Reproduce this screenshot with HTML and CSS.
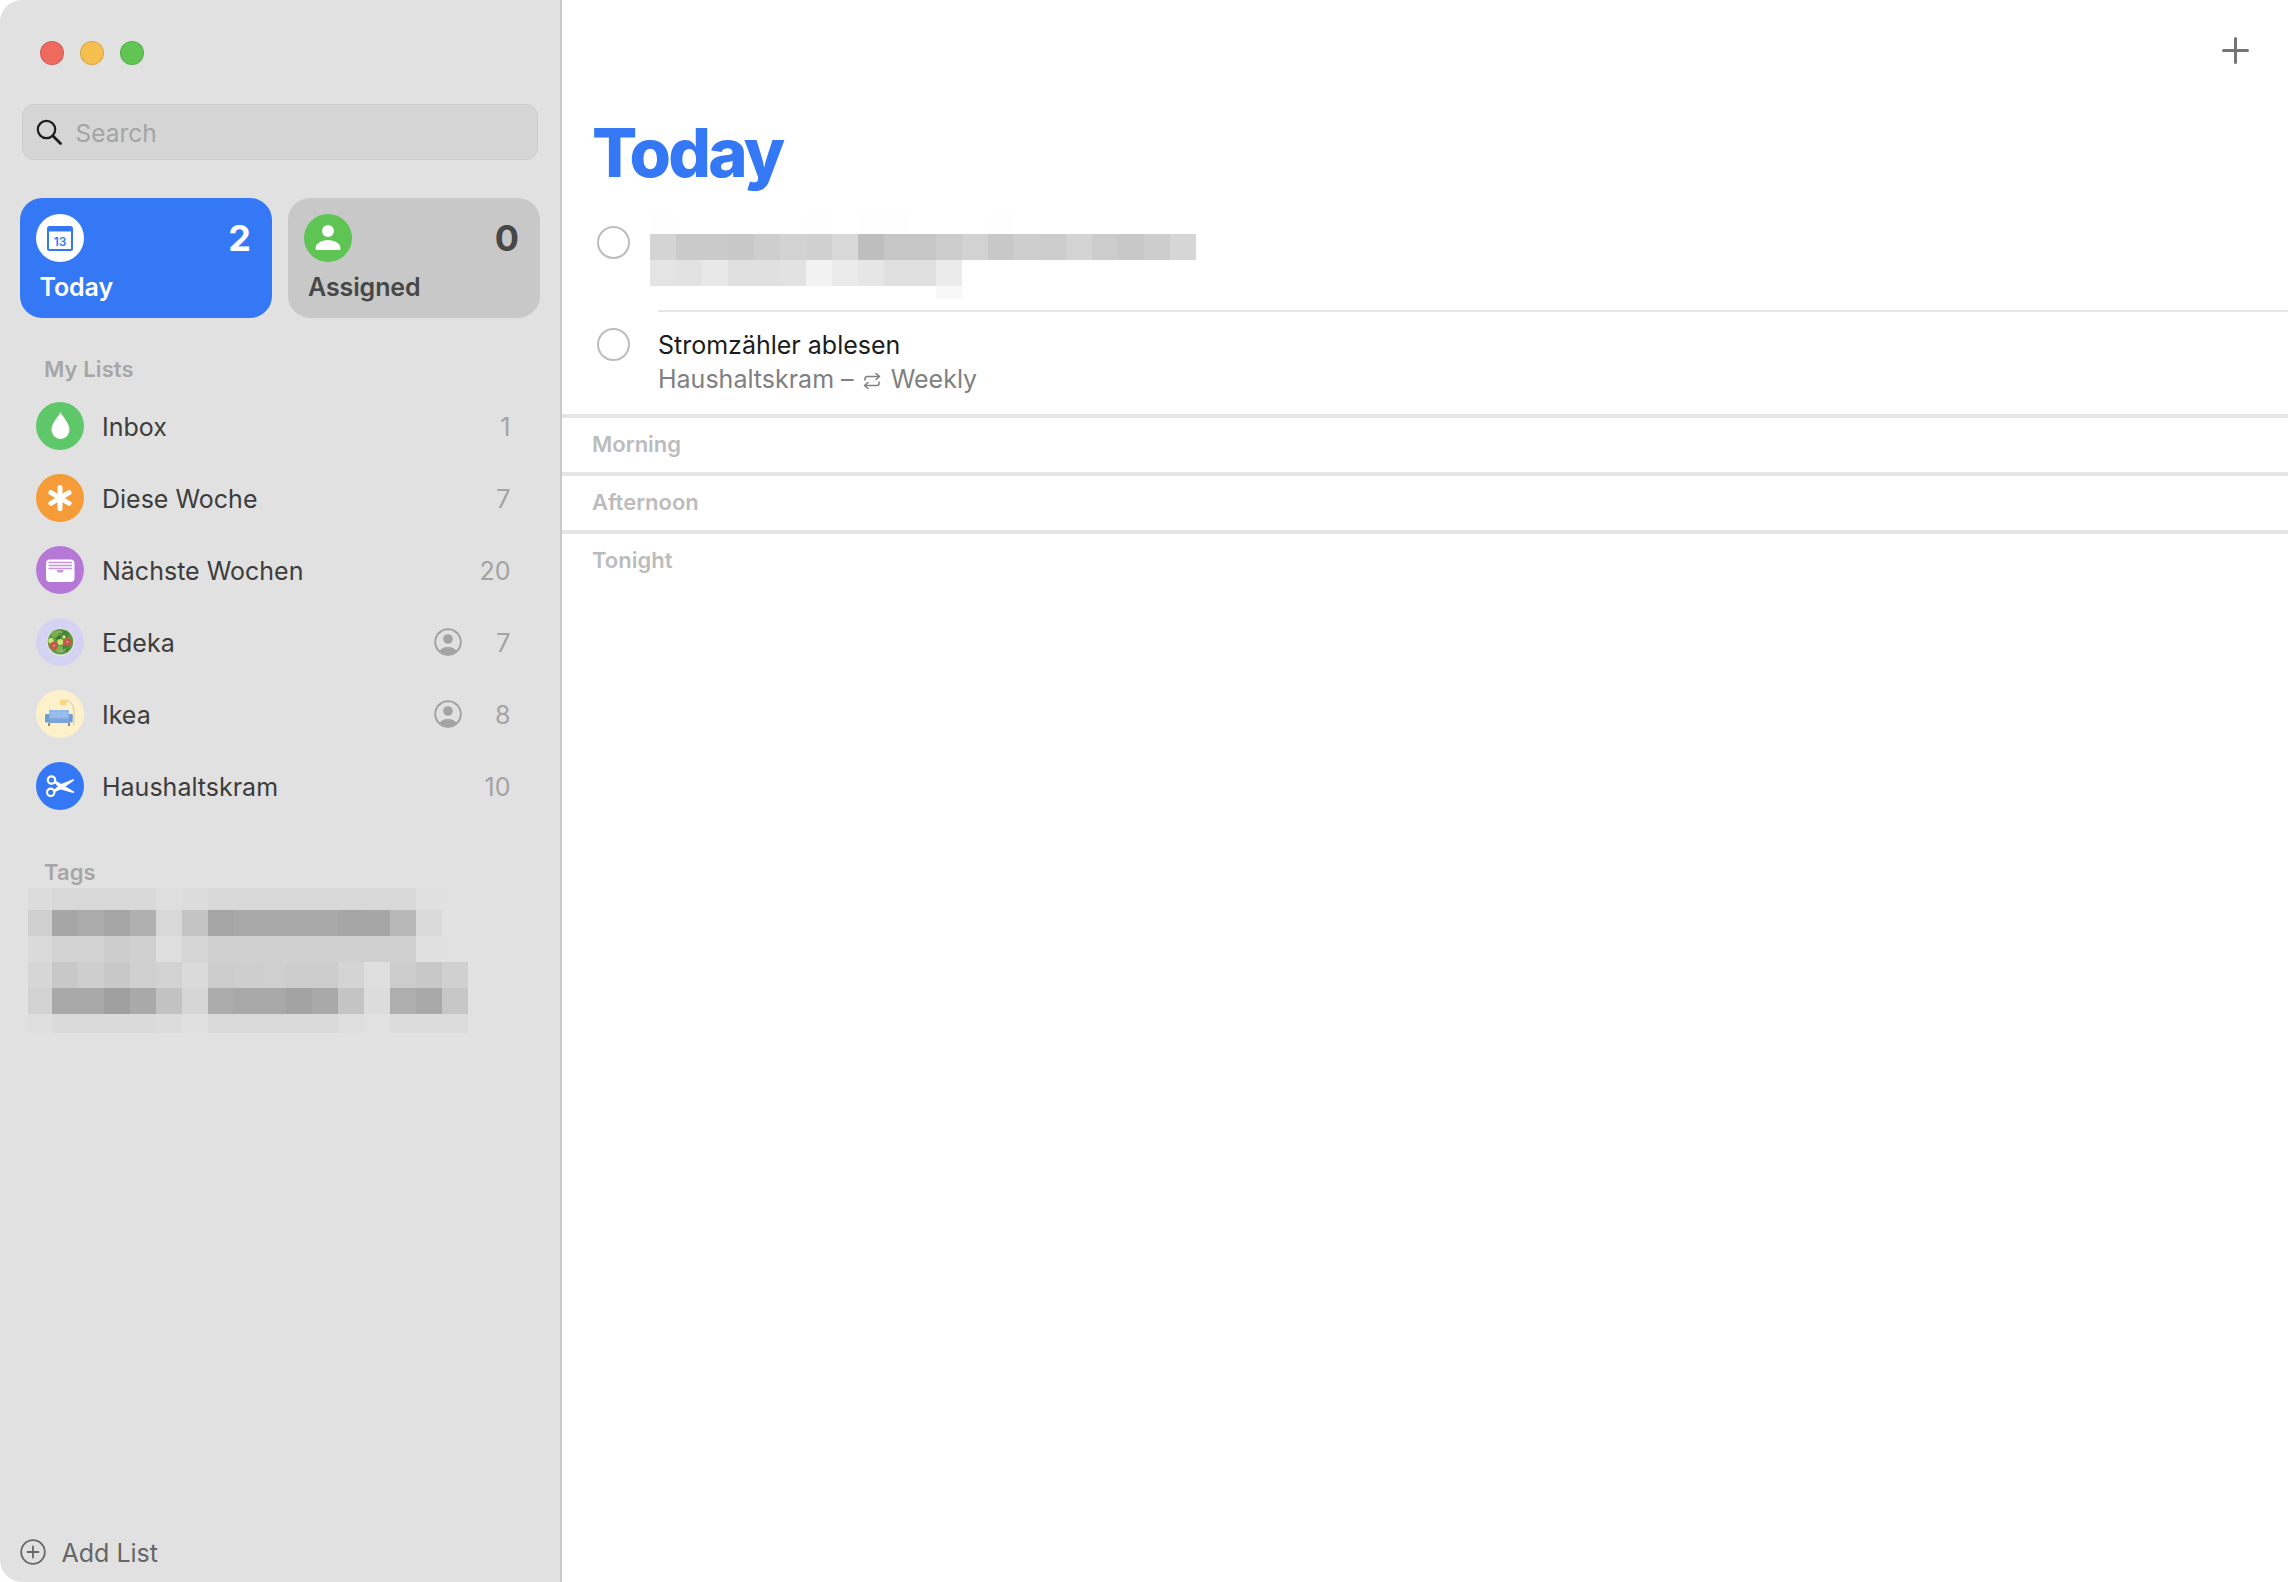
FILE: index.html
```html
<!DOCTYPE html>
<html lang="en">
<head>
<meta charset="utf-8">
<title>Reminders</title>
<link rel="stylesheet" href="styles.css">
</head>
<body>
<div class="window">
  <aside class="sidebar">
    <div class="traffic">
      <span class="light red"></span><span class="light yellow"></span><span class="light green"></span>
    </div>
    <div class="search">
      <svg class="search-icon" viewBox="0 0 26 26"><circle cx="10.5" cy="10.5" r="8.7" fill="none" stroke="#1d1d1d" stroke-width="2.2"/><path d="M17 17l7.5 7.5" stroke="#1d1d1d" stroke-width="2.8" stroke-linecap="round"/></svg>
      <span class="search-text">Search</span>
    </div>
    <div class="cards">
      <div class="card card-today">
        <div class="card-top">
          <svg class="icon" viewBox="0 0 48 48"><circle cx="24" cy="24" r="24" fill="#fff"/><rect x="11" y="12" width="26" height="25" rx="2.5" fill="#3578f6"/><rect x="13" y="17.5" width="22" height="17.5" fill="#fff"/><text x="24" y="31.500" text-anchor="middle" class="cal-num">13</text></svg>
          <span class="card-count">2</span>
        </div>
        <div class="card-label">Today</div>
      </div>
      <div class="card card-assigned">
        <div class="card-top">
          <svg class="icon" viewBox="0 0 48 48"><circle cx="24" cy="24" r="24" fill="#5ec454"/><circle cx="24" cy="17" r="6" fill="#fff"/><path d="M11.5 34.5c0-5 6-8.500 12.500-8.500s12.500 3.500 12.500 8.500c0 1-.8 1.500-1.800 1.500h-21.400c-1 0-1.800-.5-1.800-1.500z" fill="#fff"/></svg>
          <span class="card-count">0</span>
        </div>
        <div class="card-label">Assigned</div>
      </div>
    </div>

    <h2 class="side-heading lists-heading">My Lists</h2>
    <ul class="lists">
      <li class="list-row">
        <svg class="icon" viewBox="0 0 48 48"><circle cx="24" cy="24" r="24" fill="#5ec76a"/><path d="M24.500 10c1 3.500 9 10.500 9 18a9 9 0 0 1-18 0c0-7.500 8-14.500 9-18z" fill="#fff"/></svg>
        <span class="list-name">Inbox</span><span class="list-count">1</span>
      </li>
      <li class="list-row">
        <svg class="icon" viewBox="0 0 48 48"><circle cx="24" cy="24" r="24" fill="#f59b38"/><g stroke="#fff" stroke-width="5" stroke-linecap="round"><path d="M24 13.500v21"/><path d="M14.900 18.700l18.200 10.600"/><path d="M33.100 18.700l-18.200 10.600"/></g></svg>
        <span class="list-name">Diese Woche</span><span class="list-count">7</span>
      </li>
      <li class="list-row">
        <svg class="icon" viewBox="0 0 48 48"><circle cx="24" cy="24" r="24" fill="#b678d6"/><rect x="10" y="13.500" width="28.500" height="22.500" rx="4" fill="#fff"/><path d="M12.500 16.500h23.500M12.500 19.500h23.500M12.500 22.500h23.500" stroke="#c795e0" stroke-width="1.300"/><path d="M20.500 24h7.500l-1.500 2.500h-4.500z" fill="#c795e0"/></svg>
        <span class="list-name">Nächste Wochen</span><span class="list-count">20</span>
      </li>
      <li class="list-row">
        <svg class="icon" viewBox="0 0 48 48"><circle cx="24" cy="24" r="24" fill="#d4d4f2"/><circle cx="24.500" cy="24.300" r="13.800" fill="#e6e6e6"/><circle cx="24.500" cy="23.800" r="12.800" fill="#5f9a3f"/><circle cx="19" cy="16" r="3.500" fill="#78ad4e"/><circle cx="29" cy="16.500" r="3.800" fill="#4a8636"/><circle cx="23" cy="20" r="2.600" fill="#3e7a30"/><circle cx="30" cy="30" r="3.400" fill="#4a8636"/><circle cx="23.500" cy="31.500" r="3.400" fill="#7eb255"/><circle cx="15" cy="22.700" r="2.700" fill="#cde77a"/><circle cx="24.300" cy="24" r="2.900" fill="#cde77a"/><circle cx="28" cy="19" r="1.700" fill="#cde77a"/><circle cx="31.300" cy="24" r="4" fill="#c8574a"/><circle cx="18" cy="27.700" r="4" fill="#c8574a"/><circle cx="18" cy="27.700" r="1.300" fill="#e0857a"/><circle cx="31.300" cy="24" r="1.300" fill="#e0857a"/><path d="M21 14.500c2-1.500 4-1 5 .5M25 33c2 .5 4-.5 4.500-2.500" fill="none" stroke="#d6a8c6" stroke-width="1"/></svg>
        <span class="list-name">Edeka</span>
        <svg class="shared" viewBox="0 0 28 28"><defs><clipPath id="ring-a"><circle cx="14" cy="14" r="12.500"/></clipPath></defs><circle cx="14" cy="14" r="12.800" fill="none" stroke="#a3a3a3" stroke-width="2"/><circle cx="14" cy="11" r="4.800" fill="#a3a3a3"/><path d="M4 28c0-6 5-9 10-9s10 3 10 9z" fill="#a3a3a3" clip-path="url(#ring-a)"/></svg>
        <span class="list-count">7</span>
      </li>
      <li class="list-row">
        <svg class="icon" viewBox="0 0 48 48"><circle cx="24" cy="24" r="24" fill="#fdf1cb"/><path d="M30.500 10.500c5 .5 7.500 6 7.500 13v12" fill="none" stroke="#cfc8b4" stroke-width="1"/><rect x="24" y="9.500" width="6.700" height="5.500" rx="1" fill="#f7d888"/><rect x="13" y="20" width="20" height="9" rx="1" fill="#8fb5ea"/><path d="M13 23h20M13 26h20M18 20v9M23 20v9M28 20v9" stroke="#a9c8f0" stroke-width=".7"/><rect x="9" y="24" width="4.300" height="8.500" rx="1.300" fill="#6f9bd6"/><rect x="32.700" y="24" width="4" height="8.500" rx="1.300" fill="#6f9bd6"/><rect x="13" y="28.500" width="20" height="4.500" fill="#7aa4dc"/><path d="M13 33v3M33 33v3" stroke="#6c5a45" stroke-width="1.400"/></svg>
        <span class="list-name">Ikea</span>
        <svg class="shared" viewBox="0 0 28 28"><defs><clipPath id="ring-b"><circle cx="14" cy="14" r="12.500"/></clipPath></defs><circle cx="14" cy="14" r="12.800" fill="none" stroke="#a3a3a3" stroke-width="2"/><circle cx="14" cy="11" r="4.800" fill="#a3a3a3"/><path d="M4 28c0-6 5-9 10-9s10 3 10 9z" fill="#a3a3a3" clip-path="url(#ring-b)"/></svg>
        <span class="list-count">8</span>
      </li>
      <li class="list-row">
        <svg class="icon" viewBox="0 0 48 48"><circle cx="24" cy="24" r="24" fill="#3578f6"/><circle cx="15.500" cy="18" r="3.700" fill="none" stroke="#fff" stroke-width="2.200"/><circle cx="14.700" cy="30.300" r="3.700" fill="none" stroke="#fff" stroke-width="2.200"/><path d="M18 20.500l1.200-2 18.800 11q.8 1.300-1 1.500l-12-3.500z" fill="#fff"/><path d="M17.500 28l1.200 2 7.300-3 12-8.500q.8-1.300-1-1.300l-12.500 5z" fill="#fff"/></svg>
        <span class="list-name">Haushaltskram</span><span class="list-count">10</span>
      </li>
    </ul>

    <h2 class="side-heading tags-heading">Tags</h2>
    <svg class="tag-blur" viewBox="28 888 440 145" shape-rendering="crispEdges">
      <rect x="28" y="888" width="24" height="22" fill="#dcdcdc"/><rect x="52" y="888" width="104" height="22" fill="#d8d8d8"/><rect x="156" y="888" width="26" height="22" fill="#dedede"/><rect x="182" y="888" width="26" height="22" fill="#dcdcdc"/><rect x="208" y="888" width="208" height="22" fill="#d8d8d8"/><rect x="416" y="888" width="26" height="22" fill="#e0e0e0"/>
      <rect x="28" y="910" width="24" height="26" fill="#cfcfcf"/><rect x="52" y="910" width="26" height="26" fill="#a6a6a6"/><rect x="78" y="910" width="26" height="26" fill="#ababab"/><rect x="104" y="910" width="26" height="26" fill="#a5a5a5"/><rect x="130" y="910" width="26" height="26" fill="#b0b0b0"/><rect x="156" y="910" width="26" height="26" fill="#d8d8d8"/><rect x="182" y="910" width="26" height="26" fill="#c4c4c4"/><rect x="208" y="910" width="26" height="26" fill="#a5a5a5"/><rect x="234" y="910" width="104" height="26" fill="#a9a9a9"/><rect x="338" y="910" width="26" height="26" fill="#a5a5a5"/><rect x="364" y="910" width="26" height="26" fill="#a6a6a6"/><rect x="390" y="910" width="26" height="26" fill="#b8b8b8"/><rect x="416" y="910" width="26" height="26" fill="#dadada"/>
      <rect x="28" y="936" width="24" height="26" fill="#dadada"/><rect x="52" y="936" width="52" height="26" fill="#d2d2d2"/><rect x="104" y="936" width="26" height="26" fill="#cdcdcd"/><rect x="130" y="936" width="26" height="26" fill="#d0d0d0"/><rect x="156" y="936" width="26" height="26" fill="#dedede"/><rect x="182" y="936" width="26" height="26" fill="#d5d5d5"/><rect x="208" y="936" width="208" height="26" fill="#d0d0d0"/><rect x="416" y="936" width="26" height="26" fill="#e0e0e0"/>
      <rect x="28" y="962" width="24" height="26" fill="#d6d6d6"/><rect x="52" y="962" width="26" height="26" fill="#c8c8c8"/><rect x="78" y="962" width="26" height="26" fill="#cecece"/><rect x="104" y="962" width="26" height="26" fill="#c8c8c8"/><rect x="130" y="962" width="26" height="26" fill="#cfcfcf"/><rect x="156" y="962" width="26" height="26" fill="#d2d2d2"/><rect x="182" y="962" width="26" height="26" fill="#dadada"/><rect x="208" y="962" width="26" height="26" fill="#cccccc"/><rect x="234" y="962" width="26" height="26" fill="#cecece"/><rect x="260" y="962" width="26" height="26" fill="#cfcfcf"/><rect x="286" y="962" width="52" height="26" fill="#cccccc"/><rect x="338" y="962" width="26" height="26" fill="#d4d4d4"/><rect x="364" y="962" width="26" height="26" fill="#dedede"/><rect x="390" y="962" width="26" height="26" fill="#cccccc"/><rect x="416" y="962" width="26" height="26" fill="#c8c8c8"/><rect x="442" y="962" width="26" height="26" fill="#d0d0d0"/>
      <rect x="28" y="988" width="24" height="26" fill="#d2d2d2"/><rect x="52" y="988" width="52" height="26" fill="#a8a8a8"/><rect x="104" y="988" width="26" height="26" fill="#9f9f9f"/><rect x="130" y="988" width="26" height="26" fill="#a9a9a9"/><rect x="156" y="988" width="26" height="26" fill="#c2c2c2"/><rect x="182" y="988" width="26" height="26" fill="#d6d6d6"/><rect x="208" y="988" width="26" height="26" fill="#ababab"/><rect x="234" y="988" width="52" height="26" fill="#a8a8a8"/><rect x="286" y="988" width="26" height="26" fill="#a3a3a3"/><rect x="312" y="988" width="26" height="26" fill="#a9a9a9"/><rect x="338" y="988" width="26" height="26" fill="#c4c4c4"/><rect x="364" y="988" width="26" height="26" fill="#dcdcdc"/><rect x="390" y="988" width="26" height="26" fill="#aeaeae"/><rect x="416" y="988" width="26" height="26" fill="#a8a8a8"/><rect x="442" y="988" width="26" height="26" fill="#c6c6c6"/>
      <rect x="28" y="1014" width="24" height="19" fill="#dedede"/><rect x="52" y="1014" width="104" height="19" fill="#dadada"/><rect x="156" y="1014" width="26" height="19" fill="#dcdcdc"/><rect x="182" y="1014" width="26" height="19" fill="#e0e0e0"/><rect x="208" y="1014" width="130" height="19" fill="#dadada"/><rect x="338" y="1014" width="26" height="19" fill="#dedede"/><rect x="364" y="1014" width="26" height="19" fill="#e1e1e1"/><rect x="390" y="1014" width="78" height="19" fill="#dcdcdc"/>
    </svg>

    <div class="add-list">
      <svg class="add-icon" viewBox="0 0 26 26"><circle cx="13" cy="13" r="11.800" fill="none" stroke="#666" stroke-width="1.800"/><path d="M13 7.500v11M7.500 13h11" stroke="#666" stroke-width="1.800" stroke-linecap="round"/></svg>
      <span class="add-text">Add List</span>
    </div>
  </aside>

  <main class="main">
    <div class="toolbar">
      <svg class="plus" viewBox="0 0 27 27"><path d="M13.500 1.500v24M1.500 13.500h24" stroke="#757575" stroke-width="3" stroke-linecap="round"/></svg>
    </div>
    <h1 class="title">Today</h1>

    <div class="task">
      <span class="check check-first"></span>
      <div class="task-body task-body-first">
        <svg class="task-blur" viewBox="650 213 546 86" shape-rendering="crispEdges">
          <rect x="650" y="213" width="26" height="21" fill="#fefefe"/><rect x="806" y="213" width="26" height="21" fill="#fefefe"/><rect x="858" y="213" width="52" height="21" fill="#fefefe"/><rect x="988" y="213" width="26" height="21" fill="#fefefe"/>
          <rect x="650" y="234" width="26" height="26" fill="#d4d4d4"/><rect x="676" y="234" width="52" height="26" fill="#cacaca"/><rect x="728" y="234" width="26" height="26" fill="#c8c8c8"/><rect x="754" y="234" width="26" height="26" fill="#cecece"/><rect x="780" y="234" width="26" height="26" fill="#d2d2d2"/><rect x="806" y="234" width="26" height="26" fill="#d0d0d0"/><rect x="832" y="234" width="26" height="26" fill="#d8d8d8"/><rect x="858" y="234" width="26" height="26" fill="#bebebe"/><rect x="884" y="234" width="52" height="26" fill="#c6c6c6"/><rect x="936" y="234" width="26" height="26" fill="#cccccc"/><rect x="962" y="234" width="26" height="26" fill="#d2d2d2"/><rect x="988" y="234" width="26" height="26" fill="#c8c8c8"/><rect x="1014" y="234" width="26" height="26" fill="#cecece"/><rect x="1040" y="234" width="26" height="26" fill="#cccccc"/><rect x="1066" y="234" width="26" height="26" fill="#d4d4d4"/><rect x="1092" y="234" width="26" height="26" fill="#cccccc"/><rect x="1118" y="234" width="26" height="26" fill="#c8c8c8"/><rect x="1144" y="234" width="26" height="26" fill="#cdcdcd"/><rect x="1170" y="234" width="26" height="26" fill="#d6d6d6"/>
          <rect x="650" y="260" width="26" height="26" fill="#e4e4e4"/><rect x="676" y="260" width="26" height="26" fill="#e2e2e2"/><rect x="702" y="260" width="26" height="26" fill="#e8e8e8"/><rect x="728" y="260" width="52" height="26" fill="#e0e0e0"/><rect x="780" y="260" width="26" height="26" fill="#e2e2e2"/><rect x="806" y="260" width="26" height="26" fill="#f2f2f2"/><rect x="832" y="260" width="26" height="26" fill="#ebebeb"/><rect x="858" y="260" width="26" height="26" fill="#e6e6e6"/><rect x="884" y="260" width="52" height="26" fill="#e0e0e0"/><rect x="936" y="260" width="26" height="26" fill="#ebebeb"/>
          <rect x="936" y="286" width="26" height="13" fill="#f8f8f8"/>
        </svg>
      </div>
    </div>
    <div class="task">
      <span class="check check-second"></span>
      <div class="task-body task-body-second">
        <div class="task-title">Stromzähler ablesen</div>
        <div class="task-sub">Haushaltskram – <svg class="repeat" viewBox="0 0 20 18"><path d="M3 8V6.500a2 2 0 0 1 2-2h12M14 1.500l3.500 3-3.500 3M17 10v1.500a2 2 0 0 1-2 2H3M6 10.500l-3.500 3 3.500 3" fill="none" stroke="#808080" stroke-width="1.600" stroke-linecap="round" stroke-linejoin="round"/></svg> Weekly</div>
      </div>
    </div>

    <section class="day-part">Morning</section>
    <section class="day-part">Afternoon</section>
    <section class="day-part">Tonight</section>
  </main>
</div>
</body>
</html>
```

FILE: styles.css
```css
* { box-sizing: border-box; }
html, body { margin: 0; padding: 0; background: #fff; }
body { font-family: Inter, "Liberation Sans", sans-serif; }

.window { display: flex; width: 2288px; height: 1582px; overflow: hidden; }

/* Sidebar */
.sidebar {
  width: 562px;
  height: 100%;
  flex: none;
  display: flex;
  flex-direction: column;
  background: #e1e1e1;
  border-right: 2px solid #c9c9c9;
  border-radius: 22px 0 0 22px;
}
.traffic { display: flex; gap: 16px; padding: 41px 0 0 40px; }
.light { width: 24px; height: 24px; border-radius: 50%; border: 1px solid rgba(0,0,0,.12); }
.red { background: #ee6a5f; }
.yellow { background: #f5bf4f; }
.green { background: #61c554; }

.search {
  display: flex;
  align-items: center;
  width: 516px;
  height: 56px;
  margin: 39px 0 0 22px;
  padding-left: 12.500px;
  background: #d5d5d5;
  border: 1.500px solid #cdcdcd;
  border-radius: 12px;
}
.search-icon { width: 26px; height: 26px; flex: none; }
.search-text { margin-left: 14px; padding-top: 2px; font-size: 24.500px; line-height: 32px; color: #a4a4a4; }

.cards { display: flex; gap: 16px; margin: 38px 0 0 20px; }
.card {
  width: 252px;
  height: 120px;
  padding: 16px 21px 0 16px;
  border-radius: 22px;
}
.card-today { background: #3578f6; color: #fff; }
.card-assigned { background: #c8c8c8; color: #474747; }
.card-top { display: flex; justify-content: space-between; align-items: flex-start; }
.card-count { font-size: 36px; line-height: 42px; font-weight: 700; margin-top: 3px; }
.card-label { margin: 9px 0 0 3.500px; font-size: 25px; line-height: 32px; font-weight: 600; letter-spacing: -0.1px; }
.card-assigned .card-label { margin-left: 4px; }
.icon { width: 48px; height: 48px; flex: none; display: block; }
.cal-num { font: 600 12px Inter, sans-serif; fill: #3578f6; }

.side-heading {
  margin: 0 0 0 44px;
  font-size: 22px;
  line-height: 28px;
  font-weight: 600;
  letter-spacing: 0.1px;
  color: #a6a6a6;
}
.lists-heading { margin-top: 37px; }
.tags-heading { margin-top: 36px; }

.lists { list-style: none; margin: 7px 0 0; padding: 0 49.500px 0 36px; }
.list-row { display: flex; align-items: center; height: 72px; }
.list-name { flex: 1; margin-left: 18px; padding-top: 2px; font-size: 25px; line-height: 32px; color: #3c3c3c; }
.list-count { width: 40px; padding-top: 2px; text-align: right; font-size: 25px; line-height: 32px; color: #a3a3a3; }
.shared { width: 28px; height: 28px; flex: none; margin-right: 8.500px; }

.tag-blur { display: block; width: 440px; height: 145px; margin: 2px 0 0 28px; flex: none; }

.add-list { display: flex; align-items: center; height: 40px; margin: auto 0 10px 20px; }
.add-icon { width: 26px; height: 26px; flex: none; }
.add-text { margin-left: 15.500px; padding-top: 2px; font-size: 25px; line-height: 32px; color: #666; }

/* Main */
.main { flex: 1; min-width: 0; height: 100%; background: #fff; }
.toolbar { display: flex; justify-content: flex-end; height: 113px; padding: 37px 39px 0 0; }
.plus { width: 27px; height: 27px; }
.title {
  margin: 0;
  padding-left: 30px;
  font-size: 67px;
  line-height: 80px;
  font-weight: 800;
  letter-spacing: -2.700px;
  color: #3578f6;
}

.task { display: flex; padding-left: 35px; }
.check { width: 33px; height: 33px; flex: none; border: 2.500px solid #bdbdbd; border-radius: 50%; }
.check-first { margin-top: 33px; }
.check-second { margin-top: 16px; }
.task-body { flex: 1; margin-left: 28px; }
.task-body-first { padding: 20px 0 11px; border-bottom: 2px solid #e5e5e5; }
.task-body-second { padding: 17px 0 19px; }
.task-blur { display: block; width: 546px; height: 86px; margin-left: -8px; }
.task-title { font-size: 25px; line-height: 32px; color: #1c1c1c; }
.task-sub { margin-top: 2px; font-size: 25px; line-height: 32px; color: #808080; }
.repeat { width: 20px; height: 18px; vertical-align: -2px; margin: 0 1.500px; }

.day-part {
  height: 58px;
  padding: 12px 0 0 30px;
  border-top: 4px solid #e5e5e5;
  font-size: 22px;
  line-height: 28px;
  font-weight: 600;
  color: #bcbcbc;
}
```
